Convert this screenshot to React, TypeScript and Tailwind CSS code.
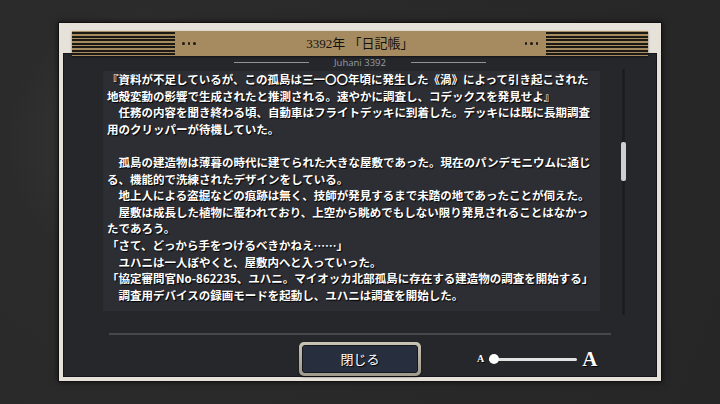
import React from 'react';

const lines: string[] = [
  '『資料が不足しているが、この孤島は三一〇〇年頃に発生した《渦》によって引き起こされた',
  '地殻変動の影響で生成されたと推測される。速やかに調査し、コデックスを発見せよ』',
  '　任務の内容を聞き終わる頃、自動車はフライトデッキに到着した。デッキには既に長期調査',
  '用のクリッパーが待機していた。',
  '',
  '　孤島の建造物は薄暮の時代に建てられた大きな屋敷であった。現在のパンデモニウムに通じ',
  'る、機能的で洗練されたデザインをしている。',
  '　地上人による盗掘などの痕跡は無く、技師が発見するまで未踏の地であったことが伺えた。',
  '　屋敷は成長した植物に覆われており、上空から眺めでもしない限り発見されることはなかっ',
  'たであろう。',
  '「さて、どっから手をつけるべきかねえ……」',
  '　ユハニは一人ぼやくと、屋敷内へと入っていった。',
  '「協定審問官No-862235、ユハニ。マイオッカ北部孤島に存在する建造物の調査を開始する」',
  '　調査用デバイスの録画モードを起動し、ユハニは調査を開始した。',
];

function Stripes({ width }: { width: string }) {
  return (
    <div className={`${width} self-stretch flex flex-col justify-between py-[1px]`}>
      {[0, 1, 2, 3, 4, 5, 6].map((i) => (
        <div key={i} className="h-[2px] bg-[#1c1813]" />
      ))}
    </div>
  );
}

function Dots() {
  return (
    <div className="flex gap-[3px]">
      <span className="w-[2.5px] h-[2.5px] rounded-full bg-[#1c1813]" />
      <span className="w-[2.5px] h-[2.5px] rounded-full bg-[#1c1813]" />
      <span className="w-[2.5px] h-[2.5px] rounded-full bg-[#1c1813]" />
    </div>
  );
}

export default function App() {
  return (
    <div className="w-[720px] h-[404px] overflow-hidden bg-[radial-gradient(circle_at_20%_35%,#3a3a3a_0%,#2b2b2b_22%,#262626_100%)] pt-[22px] pl-[58px] font-['Noto_Sans_CJK_JP',sans-serif]">
      {/* frame */}
      <div className="w-[604px] h-[360px] bg-[#e6e1d9] border border-[#111] pt-[8px] px-[4px] pb-[4px] shadow-[0_0_6px_rgba(0,0,0,0.6)]">
        {/* header */}
        <div className="relative z-10 mx-[9px] h-[25px] bg-[#a68b60] flex items-center shadow-[0_1px_2px_rgba(0,0,0,0.5)]">
          <Stripes width="w-[103px]" />
          <div className="ml-[7px]">
            <Dots />
          </div>
          <div className="flex-1 text-center text-[13px] text-[#15120e] font-['Liberation_Serif','Noto_Sans_CJK_JP',serif] leading-none">
            3392年 「日記帳」
          </div>
          <div className="mr-[8px]">
            <Dots />
          </div>
          <Stripes width="w-[102px]" />
        </div>

        {/* dark panel */}
        <div className="-mt-[3px] h-[324px] bg-[#26272b] border border-[#15161a] flex flex-col">
          <div className="mt-[3px] h-[12px] flex items-center justify-center gap-[25px]">
            <div className="w-[75px] h-px bg-[#8e9196]" />
            <div className="text-[9.5px] leading-none text-[#989ca2] font-['Open_Sans',sans-serif]">Juhani 3392</div>
            <div className="w-[75px] h-px bg-[#8e9196]" />
          </div>

          <div className="mt-[3px] ml-[39px] flex gap-[21px]">
            <div className="w-[497px] h-[240px] bg-[#2d2e33] pl-[4px] text-[11.5px] leading-[16.6px] text-white font-bold [text-shadow:1px_1px_1px_#000]">
              {lines.map((l, i) => (
                <div key={i} className="whitespace-nowrap h-[16.6px]">
                  {l}
                </div>
              ))}
            </div>
            <div className="-mt-[2px] w-[5px] h-[246px] flex justify-center relative">
              <div className="w-[3px] h-full bg-[#1c1d20]" />
              <div className="absolute top-[73px] left-0 w-[5px] h-[39px] rounded-[2px] bg-[#cfcfcf]" />
            </div>
          </div>

          <div className="mt-[18px] ml-[45px] w-[502px] h-[2px] bg-[#44484d]" />

          <div className="mt-[7px] grid grid-cols-[1fr_auto_1fr] items-center">
            <div />
            <div className="w-[122px] h-[34px] rounded-[5px] bg-gradient-to-b from-[#c9c4b4] to-[#9e998a] p-[3px] shadow-[0_1px_2px_rgba(0,0,0,0.6)]">
              <div className="w-full h-full rounded-[3px] bg-[#272e3e] border border-[#15181f] flex items-center justify-center text-[13px] text-white [text-shadow:1px_1px_1px_#000]">
                閉じる
              </div>
            </div>
            <div className="pl-[56px] flex items-center">
              <span className="text-[10px] font-bold text-white font-['Liberation_Serif',serif] [text-shadow:1px_1px_0_#000] leading-none">A</span>
              <div className="ml-[5px] relative w-[88px] h-[10px] flex items-center">
                <div className="w-full h-[3px] rounded-full bg-[#e2e2e2]" />
                <div className="absolute left-0 top-0 w-[10px] h-[10px] rounded-full bg-white" />
              </div>
              <span className="ml-[5px] text-[21px] font-bold text-white font-['Liberation_Serif',serif] [text-shadow:1px_1px_0_#000] leading-none">A</span>
            </div>
          </div>
        </div>
      </div>
    </div>
  );
}
